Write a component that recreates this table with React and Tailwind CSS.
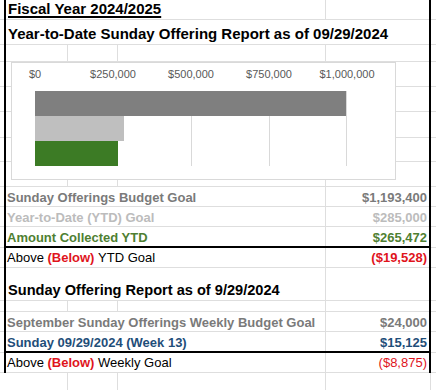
import React from 'react';

const font = { fontFamily: '"Liberation Sans", Arial, sans-serif' };

const bars = [
  { value: 1193400, color: 'bg-[#7f7f7f]' },
  { value: 285000, color: 'bg-[#bfbfbf]' },
  { value: 265472, color: 'bg-[#3c7b25]' },
];
const ticks = ['$0', '$250,000', '$500,000', '$750,000', '$1,000,000'];

// one spreadsheet row framed by the black side borders
function Row({ h, thick, children }) {
  return (
    <div className={`flex ${h}`}>
      <div className="w-[4px] border-b border-[#dedede]" />
      <div className="w-[2px] bg-black" />
      <div className={`flex w-[423px] ${thick ? 'border-b-2 border-black' : 'border-b border-[#dedede]'}`}>{children}</div>
      <div className="w-[2px] bg-black" />
      <div className="flex-1 border-b border-[#dedede]" />
    </div>
  );
}

function EmptyCells() {
  return (
    <>
      <div className="w-[61px]" />
      <div className="w-[50px] border-l border-[#dedede]" />
      <div className="w-[208px] border-l border-[#dedede]" />
      <div className="flex-1 border-l border-[#dedede]" />
    </>
  );
}

function DataRow({ label, value, color, h = 'h-[20px]', thick }) {
  return (
    <Row h={h} thick={thick}>
      <div className={`w-[319px] flex items-end pl-[1px] text-[13px] leading-[16px] font-bold whitespace-nowrap ${color}`}>{label}</div>
      <div className={`flex-1 border-l border-[#dedede] flex items-end justify-end pr-[2px] text-[13px] leading-[16px] font-bold ${color}`}>{value}</div>
    </Row>
  );
}

function DiffRow({ what, value, valueClass }) {
  return (
    <Row h="h-[20px]">
      <div className="w-[319px] flex items-end pl-[1px] pb-[1px] text-[13px] leading-[16px] text-black whitespace-nowrap">
        <span>Above&nbsp;</span><span className="font-bold text-[#e0141c]">(Below)</span><span>&nbsp;{what}</span>
      </div>
      <div className={`flex-1 border-l border-[#dedede] flex items-end justify-end pr-[2px] pb-[1px] text-[13px] leading-[16px] text-[#e0141c] ${valueClass}`}>{value}</div>
    </Row>
  );
}

export default function App() {
  return (
    <div className="relative w-[436px] h-[390px] overflow-hidden bg-white text-black" style={font}>
      {/* title rows */}
      <Row h="h-[20px]">
        <div className="w-[319px] pl-[2px] text-[15px] leading-[18px] font-bold whitespace-nowrap">
          <span className="underline decoration-[1.5px] underline-offset-[2px]">Fiscal Year 2024/2025</span>
        </div>
        <div className="flex-1 border-l border-[#dedede]" />
      </Row>
      <Row h="h-[25px]">
        <div className="flex-1 flex items-end pl-[2px] pb-[1px] text-[15px] leading-[18px] font-bold whitespace-nowrap">
          Year-to-Date Sunday Offering Report as of 09/29/2024
        </div>
      </Row>
      <Row h="h-[17px]"><EmptyCells /></Row>

      {/* rows under the chart */}
      <Row h="h-[25px]"><EmptyCells /></Row>
      <Row h="h-[25px]"><EmptyCells /></Row>
      <Row h="h-[26px]"><EmptyCells /></Row>
      <Row h="h-[24px]"><EmptyCells /></Row>
      <Row h="h-[25px]"><EmptyCells /></Row>

      <DataRow label="Sunday Offerings Budget Goal" value="$1,193,400" color="text-[#7a7a7a]" />
      <DataRow label="Year-to-Date (YTD) Goal" value="$285,000" color="text-[#bcbcbc]" />
      <DataRow label="Amount Collected YTD" value="$265,472" color="text-[#4f7f32]" h="h-[21px]" thick />
      <DiffRow what="YTD Goal" value="($19,528)" valueClass="font-bold" />

      <Row h="h-[33px]">
        <div className="w-[319px] flex items-end pl-[2px] pb-[1px] text-[14.6px] leading-[18px] font-bold whitespace-nowrap">
          Sunday Offering Report as of 9/29/2024
        </div>
        <div className="flex-1 border-l border-[#dedede]" />
      </Row>
      <Row h="h-[11px]"><EmptyCells /></Row>
      <DataRow label="September Sunday Offerings Weekly Budget Goal" value="$24,000" color="text-[#7a7a7a]" />
      <DataRow label="Sunday 09/29/2024 (Week 13)" value="$15,125" color="text-[#1f4e79]" h="h-[21px]" thick />
      <DiffRow what="Weekly Goal" value="($8,875)" valueClass="font-normal" />

      {/* below the framed block */}
      <div className="flex h-[17px]">
        <div className="w-[67px]" />
        <div className="w-[50px] border-l border-[#dedede]" />
        <div className="w-[208px] border-l border-[#dedede]" />
        <div className="w-[105px] border-l border-[#dedede]" />
        <div className="flex-1 border-l border-[#dedede]" />
      </div>

      {/* chart floating over the sheet */}
      <div className="absolute left-[11px] top-[62px] w-[385px] h-[118px] bg-white border border-[#d9d9d9]">
        <div className="flex h-[22px] items-center -ml-[16px] text-[11px] text-[#595959]">
          {ticks.map(t => (
            <div key={t} className="w-[78px] text-center whitespace-nowrap">{t}</div>
          ))}
        </div>
        <div className="relative ml-[23px] mt-[6px] w-[312px] h-[75px]">
          <div className="absolute inset-0 flex">
            {[0, 1, 2, 3].map(i => (
              <div key={i} className={`w-[78px] border-l border-[#d9d9d9] ${i === 3 ? 'border-r' : ''}`} />
            ))}
          </div>
          <div className="relative flex flex-col">
            {bars.map(b => (
              <div key={b.value} className={`h-[25px] ${b.color}`} style={{ width: Math.min(b.value, 1000000) / 1000000 * 311 }} />
            ))}
          </div>
        </div>
      </div>
    </div>
  );
}
